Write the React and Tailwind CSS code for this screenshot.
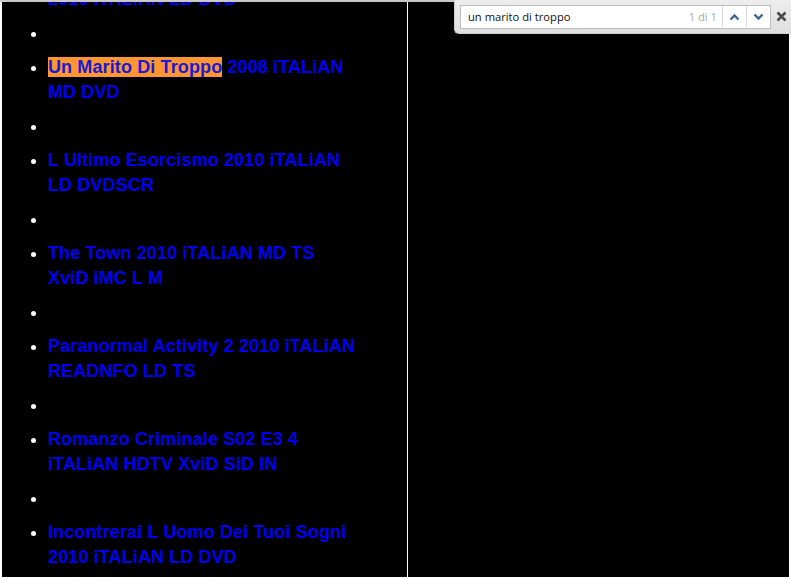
import React from "react";

const items = [
  ["Bastardi Senza Gloria 2009", "2010 iTALiAN LD DVD"],
  null,
  ["__HL__", "MD DVD"],
  null,
  ["L Ultimo Esorcismo 2010 iTALiAN", "LD DVDSCR"],
  null,
  ["The Town 2010 iTALiAN MD TS", "XviD iMC L M"],
  null,
  ["Paranormal Activity 2 2010 iTALiAN", "READNFO LD TS"],
  null,
  ["Romanzo Criminale S02 E3 4", "iTALiAN HDTV XviD SiD IN"],
  null,
  ["Incontrerai L Uomo Dei Tuoi Sogni", "2010 iTALiAN LD DVD"],
  null,
];

function Chevron({ up }) {
  return (
    <svg width="11" height="8" viewBox="0 0 11 8">
      <path
        d={up ? "M1.5 6.5 L5.5 2.5 L9.5 6.5" : "M1.5 1.5 L5.5 5.5 L9.5 1.5"}
        fill="none"
        stroke="#3f6590"
        strokeWidth="2.4"
      />
    </svg>
  );
}

export default function App() {
  return (
    <div className="relative w-[791px] h-[579px] bg-white overflow-hidden flex flex-col">
      <div className="h-[2px] bg-[#c9c9c9] shrink-0" />
      <div className="flex-1 flex gap-[1px] pl-[2px] pr-[2px] pb-[2px] min-h-0">
        <div className="w-[405px] h-full bg-black overflow-hidden">
          <ul
            className="-mt-[40px] pl-[46px] list-disc text-white flex flex-col gap-[9px] text-[18px] leading-[25px] font-bold tracking-[0.12px]"
            style={{ fontFamily: '"Liberation Sans", Arial, sans-serif' }}
          >
            {items.map((it, i) =>
              it === null ? (
                <li key={i} className="h-[25px]">
                  {"\u00a0"}
                </li>
              ) : (
                <li key={i}>
                  <a className="text-[#0000ee] whitespace-nowrap">
                    {it[0] === "__HL__" ? (
                      <>
                        <span className="bg-[#ff9632] text-[#1a1ad2]">Un Marito Di Troppo</span> 2008 iTALiAN
                      </>
                    ) : (
                      it[0]
                    )}
                    <br />
                    {it[1]}
                  </a>
                </li>
              )
            )}
          </ul>
        </div>
        <div className="flex-1 h-full bg-black" />
      </div>

      <div
        className="absolute top-0 right-0 w-[337px] h-[34px] bg-gradient-to-b from-[#eeeeee] to-[#dedede] rounded-bl-[5px] border-b border-l border-[#cfcfcf] flex items-center pl-[5px]"
        style={{ fontFamily: '"Open Sans", "Noto Sans", sans-serif' }}
      >
        <div className="w-[311px] h-[24px] bg-white border border-[#bdbdbd] flex items-center">
          <div className="flex-1 pl-[7px] text-[11.2px] text-[#111] leading-none">un marito di troppo</div>
          <div className="text-[11.2px] text-[#a8a8a8] pr-[5px] leading-none">1 di 1</div>
          <div className="w-[24px] h-full border-l border-[#dcdcdc] flex items-center justify-center">
            <Chevron up />
          </div>
          <div className="w-[24px] h-full border-l border-[#dcdcdc] flex items-center justify-center">
            <Chevron />
          </div>
        </div>
        <div className="flex-1 flex items-center justify-center pb-[1px]">
          <svg width="11" height="11" viewBox="0 0 11 11">
            <path d="M1.5 1.5 L9.5 9.5 M9.5 1.5 L1.5 9.5" stroke="#4d4d4d" strokeWidth="2.6" />
          </svg>
        </div>
      </div>
    </div>
  );
}
